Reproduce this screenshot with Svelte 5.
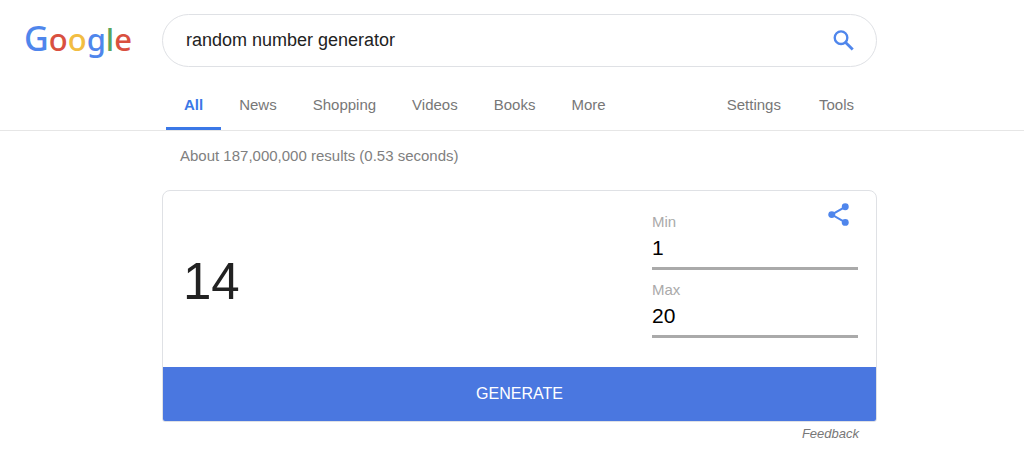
<script lang="ts">
	interface Tab {
		label: string;
		active?: boolean;
	}

	const tabs: Tab[] = [
		{ label: 'All', active: true },
		{ label: 'News' },
		{ label: 'Shopping' },
		{ label: 'Videos' },
		{ label: 'Books' },
		{ label: 'More' }
	];
	const tools = ['Settings', 'Tools'];

	let query = $state('random number generator');
	let min = $state('1');
	let max = $state('20');
	let result = $state(14);

	function generate() {
		const low = Math.ceil(Number(min));
		const high = Math.floor(Number(max));
		if (Number.isNaN(low) || Number.isNaN(high) || high < low) return;
		result = low + Math.floor(Math.random() * (high - low + 1));
	}
</script>

<header>
	<div class="row">
		<a class="logo" href="#home" aria-label="Google home">
			<span class="blue initial">G</span><span class="red">o</span><span class="yellow">o</span><span
				class="blue">g</span
			><span class="green">l</span><span class="red">e</span>
		</a>
		<form class="search" role="search" onsubmit={(e) => e.preventDefault()}>
			<input type="text" aria-label="Search" bind:value={query} />
			<button type="submit" aria-label="Google Search">
				<svg viewBox="0 0 24 24" width="27" height="27" fill="none" stroke="currentColor">
					<circle cx="9.8" cy="9.5" r="5.6" stroke-width="2.1" />
					<path d="m13.9 13.7 6.3 6.3" stroke-width="2.5" />
				</svg>
			</button>
		</form>
	</div>

	<div class="row">
		<nav>
			{#each tabs as tab}
				<a href="#{tab.label.toLowerCase()}" class:active={tab.active}>{tab.label}</a>
			{/each}
			<div class="tools">
				{#each tools as tool}
					<a href="#{tool.toLowerCase()}">{tool}</a>
				{/each}
			</div>
		</nav>
	</div>
</header>

<main class="row">
	<div class="content">
		<p class="stats">About 187,000,000 results (0.53 seconds)</p>

		<section class="card">
			<div class="body">
				<output for="min max">{result}</output>
				<div class="fields">
					<label for="min">Min</label>
					<input id="min" type="text" inputmode="numeric" bind:value={min} />
					<label for="max">Max</label>
					<input id="max" type="text" inputmode="numeric" bind:value={max} />
				</div>
				<button class="share" type="button" aria-label="Share">
					<svg viewBox="0 0 24 24" width="27" height="27">
						<path d="M18 5.2 6 12l12 7" fill="none" stroke="currentColor" stroke-width="1.8" />
						<circle cx="18" cy="5.2" r="3.1" fill="currentColor" />
						<circle cx="6" cy="12.1" r="3.1" fill="currentColor" />
						<circle cx="18" cy="19" r="3.1" fill="currentColor" />
					</svg>
				</button>
			</div>
			<button class="generate" type="button" onclick={generate}>GENERATE</button>
		</section>

		<a class="feedback" href="#feedback">Feedback</a>
	</div>
</main>

<style>
	:global(body) {
		background: #fff;
		font-family: 'Liberation Sans', Arial, sans-serif;
		color: #222;
	}

	a {
		text-decoration: none;
	}

	button {
		padding: 0;
		border: 0;
		background: none;
		font: inherit;
		cursor: pointer;
	}

	input {
		min-width: 0;
		padding: 0;
		border: 0;
		outline: 0;
		background: none;
		font: inherit;
	}

	svg {
		display: block;
	}

	header {
		padding-top: 14px;
		border-bottom: 1px solid #e6e6e6;
	}

	.row {
		display: grid;
		grid-template-columns: 138px minmax(0, 715px);
		padding: 0 24px;
	}

	.logo {
		font-family: 'Noto Sans', sans-serif;
		font-size: 31px;
		font-weight: 500;
		line-height: 49px;
		white-space: nowrap;
	}

	.initial {
		font-size: 34px;
	}

	.blue {
		color: #4f86ec;
	}

	.red {
		color: #d9503f;
	}

	.yellow {
		color: #f2bd42;
	}

	.green {
		color: #58a55c;
	}

	.search {
		display: flex;
		align-items: center;
		box-sizing: border-box;
		height: 53px;
		padding: 0 19px 0 23px;
		border: 1px solid #dfe1e5;
		border-radius: 27px;
	}

	.search input {
		flex: 1;
		font-size: 18px;
		color: #222;
	}

	.search button {
		color: #4f86ec;
	}

	nav {
		grid-column: 2;
		display: flex;
		padding: 11px 4px 0;
		font-size: 15px;
		line-height: 54px;
	}

	nav a {
		height: 49px;
		padding: 0 18px;
		border-bottom: 3px solid transparent;
		color: #777;
	}

	nav a.active {
		border-bottom-color: #3b78e7;
		color: #3b78e7;
		font-weight: 700;
	}

	.tools {
		display: flex;
		margin-left: auto;
	}

	.tools a {
		padding: 0 19px;
	}

	.content {
		grid-column: 2;
		display: flex;
		flex-direction: column;
	}

	.stats {
		margin: 0;
		padding: 15px 18px 24px;
		font-size: 15px;
		line-height: 20px;
		color: #808080;
	}

	.card {
		overflow: hidden;
		border: 1px solid #dfe1e5;
		border-radius: 8px 8px 3px 3px;
	}

	.body {
		position: relative;
		display: flex;
		align-items: center;
		justify-content: space-between;
		padding: 19px 18px 14px 20px;
	}

	output {
		font-size: 51px;
		line-height: 60px;
	}

	.fields {
		display: flex;
		flex-direction: column;
		width: 206px;
		padding-bottom: 15px;
	}

	.fields label {
		font-size: 15px;
		line-height: 24px;
		color: #aaa;
	}

	.fields input {
		height: 28px;
		margin-bottom: 8px;
		padding-bottom: 5px;
		border-bottom: 3px solid #aaa;
		font-size: 21px;
		color: #000;
	}

	.fields input:last-child {
		margin-bottom: 0;
	}

	.share {
		position: absolute;
		top: 10px;
		right: 24px;
		color: #4f86ec;
	}

	.generate {
		display: block;
		width: 100%;
		height: 54px;
		background: #4a77e0;
		color: #fff;
		font-size: 16px;
	}

	.feedback {
		align-self: flex-end;
		padding: 3px 18px;
		font-size: 13px;
		font-style: italic;
		line-height: 18px;
		color: #777;
	}
</style>
